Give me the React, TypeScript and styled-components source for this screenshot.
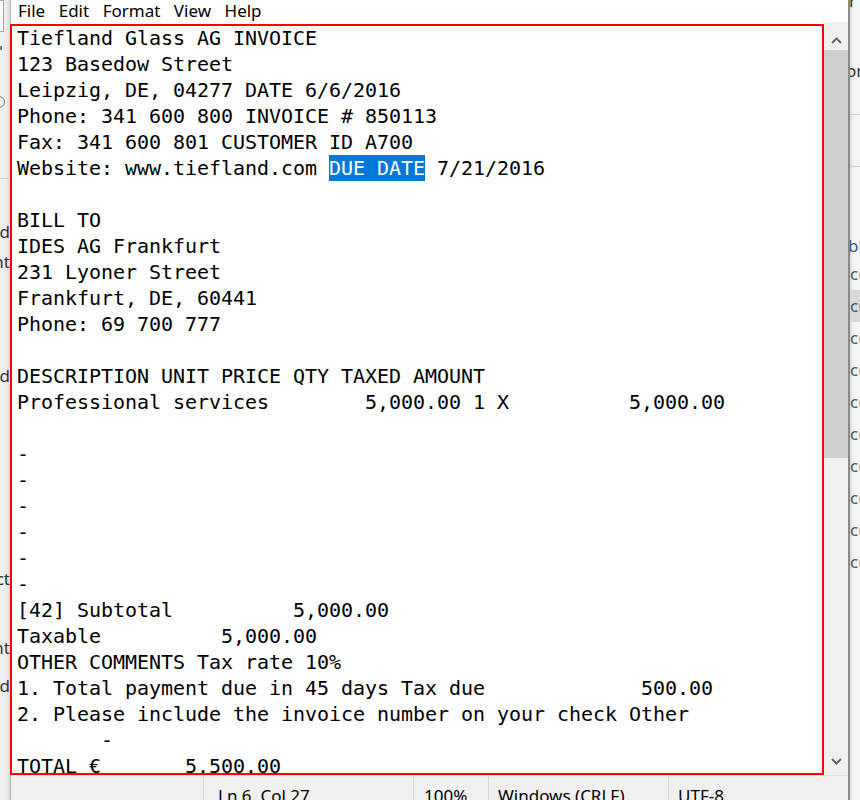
import React from "react";
import styled, { createGlobalStyle } from "styled-components";

const Global = createGlobalStyle`
  html, body { margin: 0; padding: 0; background: #f3f3f3; overflow: hidden; }
  #root { width: 860px; height: 800px; }
`;

const Screen = styled.div`
  position: relative;
  width: 860px;
  height: 800px;
  display: flex;
  overflow: hidden;
  font-family: "Noto Sans", "DejaVu Sans", sans-serif;
`;

/* ---------- background windows peeking out ---------- */
const LeftPeek = styled.div`
  width: 10px;
  flex: none;
  overflow: hidden;
  display: flex;
  flex-direction: column;
  align-items: flex-end;
  background: linear-gradient(to right, #f1f1f1 0, #ededed 6px, #dadada 10px);
`;

const RightPeek = styled.div`
  width: 10px;
  flex: none;
  overflow: hidden;
  display: flex;
  flex-direction: column;
  align-items: stretch;
  background: linear-gradient(to right, #d8d8d8 0, #f2f2f2 3px, #f6f6f6 10px);
`;

const PeekText = styled.div<{ $mt: number; $ml?: number; $color?: string }>`
  margin-top: ${(p) => p.$mt}px;
  margin-left: ${(p) => p.$ml ?? 0}px;
  height: 20px;
  line-height: 20px;
  font-size: 17px;
  white-space: pre;
  color: ${(p) => p.$color ?? "#333"};
  flex: none;
`;

const PeekBox = styled.div`
  align-self: flex-start;
  width: 4px;
  height: 32px;
  box-sizing: border-box;
  border: 1px solid #a9a9a9;
  border-left: none;
  background: #fbfbfb;
  flex: none;
`;

const PeekTick = styled.div<{ $mt: number }>`
  align-self: flex-start;
  margin-top: ${(p) => p.$mt}px;
  width: 2px;
  height: 4px;
  background: #4a7cc0;
  flex: none;
`;

const PeekRing = styled.div<{ $mt: number }>`
  align-self: flex-start;
  margin-top: ${(p) => p.$mt}px;
  margin-left: -7px;
  width: 12px;
  height: 12px;
  box-sizing: border-box;
  border: 1px solid #7d7d7d;
  border-radius: 50%;
  flex: none;
`;

const PeekRule = styled.div<{ $mt: number }>`
  align-self: stretch;
  margin-top: ${(p) => p.$mt}px;
  height: 1px;
  background: #cfcfcf;
  flex: none;
`;

const PeekRow = styled.div<{ $active?: boolean; $mt?: number }>`
  margin-top: ${(p) => p.$mt ?? 0}px;
  height: 32px;
  line-height: 32px;
  font-size: 17px;
  white-space: pre;
  color: #46566e;
  background: ${(p) => (p.$active ? "#d9d9d9" : "transparent")};
  flex: none;
`;

/* ---------- notepad window ---------- */
const Window = styled.div`
  width: 837px;
  flex: none;
  display: flex;
  flex-direction: column;
  border-left: 1px solid #b2b2b2;
  border-right: 2px solid #8a8a8a;
  background: #ffffff;
`;

const MenuBar = styled.div`
  height: 22px;
  flex: none;
  display: flex;
  align-items: flex-start;
  gap: 13.5px;
  padding-left: 7px;
  background: #ffffff;
`;

const MenuItem = styled.span`
  font-size: 17px;
  line-height: 22px;
  color: #000;
  white-space: nowrap;
`;

const EditorRow = styled.div`
  flex: 1;
  min-height: 0;
  display: flex;
`;

const TextArea = styled.div`
  flex: 1;
  min-width: 0;
  overflow: hidden;
  padding: 3px 0 0 6px;
  background: #ffffff;
  font-family: "DejaVu Sans Mono", "Liberation Mono", monospace;
  font-size: 20px;
  letter-spacing: -0.041px;
  line-height: 26px;
  color: #000;
`;

const Line = styled.div`
  height: 26px;
  white-space: pre;
`;

const Selected = styled.span`
  display: inline-block;
  height: 26px;
  vertical-align: top;
  background: #0078d7;
  color: #ffffff;
`;

const Scrollbar = styled.div`
  width: 24px;
  flex: none;
  display: flex;
  flex-direction: column;
  background: #f0f0f0;
`;

const ArrowButton = styled.div<{ $h: number; $pad: string }>`
  height: ${(p) => p.$h}px;
  flex: none;
  display: flex;
  justify-content: center;
  align-items: flex-start;
  padding: ${(p) => p.$pad};
  box-sizing: border-box;
`;

const Thumb = styled.div`
  height: 408px;
  flex: none;
  background: #cdcdcd;
`;

const Track = styled.div`
  flex: 1;
`;

const StatusBar = styled.div`
  height: 25px;
  flex: none;
  box-sizing: border-box;
  border-top: 1px solid #e2e2e2;
  background: #f0f0f0;
  display: flex;
  overflow: hidden;
`;

const StatusCell = styled.div<{ $w: number; $pad: number; $sep?: boolean }>`
  width: ${(p) => p.$w}px;
  flex: none;
  box-sizing: border-box;
  border-left: ${(p) => (p.$sep ? "1px solid #d9d9d9" : "none")};
  padding: 9px 0 0 ${(p) => p.$pad}px;
  font-size: 17px;
  line-height: 22px;
  color: #000;
  white-space: nowrap;
`;

const Annotation = styled.div`
  position: absolute;
  left: 10px;
  top: 24px;
  width: 814px;
  height: 751px;
  box-sizing: border-box;
  border: 2px solid #ff0000;
  pointer-events: none;
`;

const Chevron = ({ up }: { up?: boolean }) => (
  <svg width="11" height="7" viewBox="0 0 11 7">
    <path
      d={up ? "M1 6 L5.5 1.5 L10 6" : "M1 1 L5.5 5.5 L10 1"}
      fill="none"
      stroke="#606060"
      strokeWidth="1.9"
    />
  </svg>
);

type Seg = string | { sel: string };
const LINES: Seg[][] = [
  ["Tiefland Glass AG INVOICE"],
  ["123 Basedow Street"],
  ["Leipzig, DE, 04277 DATE 6/6/2016"],
  ["Phone: 341 600 800 INVOICE # 850113"],
  ["Fax: 341 600 801 CUSTOMER ID A700"],
  ["Website: www.tiefland.com ", { sel: "DUE DATE" }, " 7/21/2016"],
  [""],
  ["BILL TO"],
  ["IDES AG Frankfurt"],
  ["231 Lyoner Street"],
  ["Frankfurt, DE, 60441"],
  ["Phone: 69 700 777"],
  [""],
  ["DESCRIPTION UNIT PRICE QTY TAXED AMOUNT"],
  ["Professional services        5,000.00 1 X          5,000.00"],
  [""],
  ["-"],
  ["-"],
  ["-"],
  ["-"],
  ["-"],
  ["-"],
  ["[42] Subtotal          5,000.00"],
  ["Taxable          5,000.00"],
  ["OTHER COMMENTS Tax rate 10%"],
  ["1. Total payment due in 45 days Tax due             500.00"],
  ["2. Please include the invoice number on your check Other"],
  ["       -"],
  ["TOTAL €       5,500.00"],
];

const MENU = ["File", "Edit", "Format", "View", "Help"];

export default function App() {
  return (
    <>
      <Global />
      <Screen>
        <LeftPeek>
          <PeekBox />
          <PeekTick $mt={14} />
          <PeekRing $mt={46} />
          <PeekRule $mt={70} />
          <PeekText $mt={43}>nd</PeekText>
          <PeekText $mt={10}>ent</PeekText>
          <PeekText $mt={94}>nd</PeekText>
          <PeekText $mt={94}>{"–      "}</PeekText>
          <PeekText $mt={69}>ct</PeekText>
          <PeekText $mt={49}>ent</PeekText>
          <PeekText $mt={18}>nd</PeekText>
        </LeftPeek>

        <Window>
          <MenuBar>
            {MENU.map((m) => (
              <MenuItem key={m}>{m}</MenuItem>
            ))}
          </MenuBar>
          <EditorRow>
            <TextArea>
              {LINES.map((segs, i) => (
                <Line key={i}>
                  {segs.map((s, j) =>
                    typeof s === "string" ? (
                      <React.Fragment key={j}>{s}</React.Fragment>
                    ) : (
                      <Selected key={j}>{s.sel}</Selected>
                    )
                  )}
                </Line>
              ))}
            </TextArea>
            <Scrollbar>
              <ArrowButton $h={28} $pad="15px 0 0 0">
                <Chevron up />
              </ArrowButton>
              <Thumb />
              <Track />
              <ArrowButton $h={27} $pad="10px 0 0 0">
                <Chevron />
              </ArrowButton>
            </Scrollbar>
          </EditorRow>
          <StatusBar>
            <StatusCell $w={192} $pad={0} />
            <StatusCell $w={210} $pad={14} $sep>
              Ln 6, Col 27
            </StatusCell>
            <StatusCell $w={75} $pad={10} $sep>
              100%
            </StatusCell>
            <StatusCell $w={180} $pad={9} $sep>
              Windows (CRLF)
            </StatusCell>
            <StatusCell $w={180} $pad={9} $sep>
              UTF-8
            </StatusCell>
          </StatusBar>
        </Window>

        <RightPeek>
          <PeekText $mt={-9} $ml={-1}>r</PeekText>
          <PeekText $mt={50} $ml={-4}>org</PeekText>
          <PeekRule $mt={33} />
          <PeekRule $mt={51} />
          <PeekText $mt={69} $ml={-2} $color="#3f5478">bl</PeekText>
          <PeekRow $mt={2}>cu</PeekRow>
          <PeekRow $active>cu</PeekRow>
          <PeekRow>cu</PeekRow>
          <PeekRow>cu</PeekRow>
          <PeekRow>cu</PeekRow>
          <PeekRow>cu</PeekRow>
          <PeekRow>cu</PeekRow>
          <PeekRow>cu</PeekRow>
          <PeekRow>cu</PeekRow>
          <PeekRow>cu</PeekRow>
        </RightPeek>

        <Annotation />
      </Screen>
    </>
  );
}
